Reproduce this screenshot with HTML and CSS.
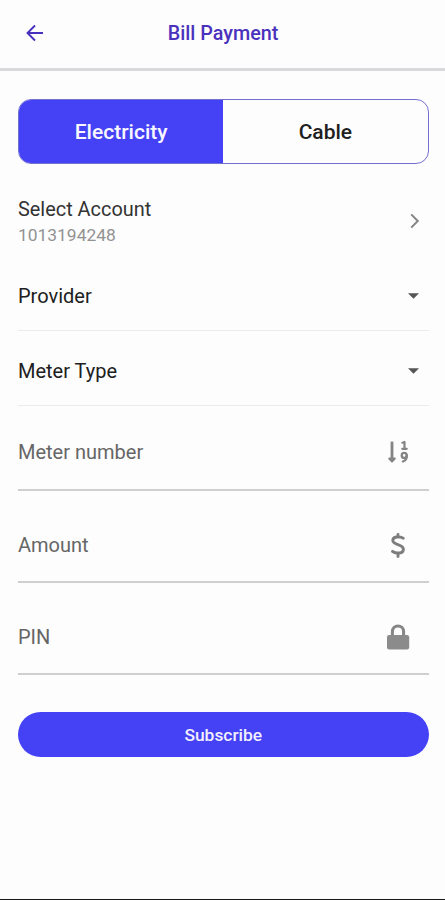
FILE: index.html
```html
<!DOCTYPE html>
<html lang="en">
<head>
<meta charset="utf-8">
<title>Bill Payment</title>
<link rel="stylesheet" href="styles.css">
</head>
<body>
<div class="screen">
  <header class="header">
    <svg class="back" viewBox="0 0 18 18"><path d="M17 9H2M9 1.5L1.5 9L9 16.5"/></svg>
    <h1 class="title">Bill Payment</h1>
  </header>
  <main class="content">
    <div class="tabs">
      <div class="tab active">Electricity</div>
      <div class="tab">Cable</div>
    </div>
    <div class="account">
      <div>
        <div class="account-label">Select Account</div>
        <div class="account-number">1013194248</div>
      </div>
      <svg class="chevron" viewBox="0 0 10 16"><path d="M1.2 1.4L7.8 8L1.2 14.6"/></svg>
    </div>
    <div class="select"><span class="provider">Provider</span><svg class="caret" viewBox="0 0 12 6"><path d="M0 0H12L6 6Z"/></svg></div>
    <div class="select"><span class="meter-type">Meter Type</span><svg class="caret" viewBox="0 0 12 6"><path d="M0 0H12L6 6Z"/></svg></div>
    <div class="field"><span class="meter-number">Meter number</span>
      <svg class="icon" viewBox="0 0 28 28"><g fill="none" stroke="#858585" stroke-linecap="round" stroke-linejoin="round"><path d="M8 3.6V22" stroke-width="2.8" stroke-linecap="butt"/><path d="M5.2 20.6H10.8L8 23.5Z" fill="#858585" stroke-width="2"/><path d="M18.4 4.7L20.5 4V10M18.3 10.8H22.7" stroke-width="2.2"/><circle cx="20.2" cy="17.4" r="2.5" stroke-width="2.3"/><path d="M22.8 17.4C23 21 21.6 22.6 18.9 23.5" stroke-width="2.3"/></g></svg>
    </div>
    <div class="field"><span class="amount">Amount</span>
      <svg class="icon" viewBox="0 0 28 28"><path d="M14 3.5V6M14 22V25.5M19.3 7.2C15.3 5.2 8.8 5.3 8.8 9.5C8.8 14.4 19.4 12.7 19.4 18.2C19.4 23 12.5 22.9 8.5 20.4" fill="none" stroke="#7d7d7d" stroke-width="2.9" stroke-linecap="round"/></svg>
    </div>
    <div class="field"><span class="pin">PIN</span>
      <svg class="icon" viewBox="0 0 28 28"><path d="M8.4 13V8.8C8.4 1 19.6 1 19.6 8.8V13" fill="none" stroke="#858585" stroke-width="3"/><rect x="3" y="12" width="22.2" height="14.5" rx="2.2" fill="#8b8b8b"/></svg>
    </div>
    <button class="subscribe" type="button">Subscribe</button>
  </main>
</div>
</body>
</html>
```

FILE: styles.css
```css
* { box-sizing: border-box; }
body { margin: 0; background: #fdfdfd; font-family: Roboto, sans-serif; color: #202020; }
.screen { height: 900px; border-bottom: 1.5px solid #171717; }
.header {
  height: 71px;
  display: grid;
  grid-template-columns: 60px 1fr 60px;
  align-items: center;
  padding-bottom: 2px;
  border-bottom: 3px solid #d9d9db;
}
.back { width: 18px; height: 18px; margin-left: 26px; fill: none; stroke: #4630bd; stroke-width: 1.9; }
.title { margin: 0; padding-left: 1px; text-align: center; font-size: 19.8px; font-weight: 500; color: #4a32bd; }
.content { padding: 28px 16.5px 0 18px; }
.tabs { display: flex; height: 65px; border: 1px solid #7470cf; border-radius: 13px; overflow: hidden; }
.tab { flex: 1; display: flex; align-items: center; justify-content: center; font-size: 21px; font-weight: 500; }
.tab.active { background: #4542f5; color: #f8f7ff; }
.account { display: flex; align-items: center; justify-content: space-between; height: 60px; margin-top: 27px; }
.account-label { font-size: 19.9px; line-height: 27px; color: #333; }
.account-number { font-size: 17.4px; line-height: 24px; color: #929292; }
.chevron { width: 10px; height: 16px; margin-right: 9px; fill: none; stroke: #858585; stroke-width: 2; }
.select { display: flex; align-items: center; justify-content: space-between; height: 75px; padding-top: 6px; border-bottom: 1px solid #ececec; font-size: 20px; }
.account + .select { height: 80px; padding-top: 10px; }
.caret { width: 11px; height: 6px; margin-right: 9.5px; fill: #555; }
.field { display: flex; align-items: center; justify-content: space-between; height: 92px; padding-top: 18px; border-bottom: 2px solid #cfcfcf; font-size: 20px; color: #666; }
.select + .field { height: 84.5px; padding-top: 10px; }
.icon { width: 28px; height: 28px; margin-right: 16.5px; }
.subscribe { display: block; width: 100%; height: 45px; margin-top: 37.5px; padding: 0; border: 0; border-radius: 23px; background: #4542f5; color: #f2efff; font: 500 17.4px Roboto, sans-serif; }
```
